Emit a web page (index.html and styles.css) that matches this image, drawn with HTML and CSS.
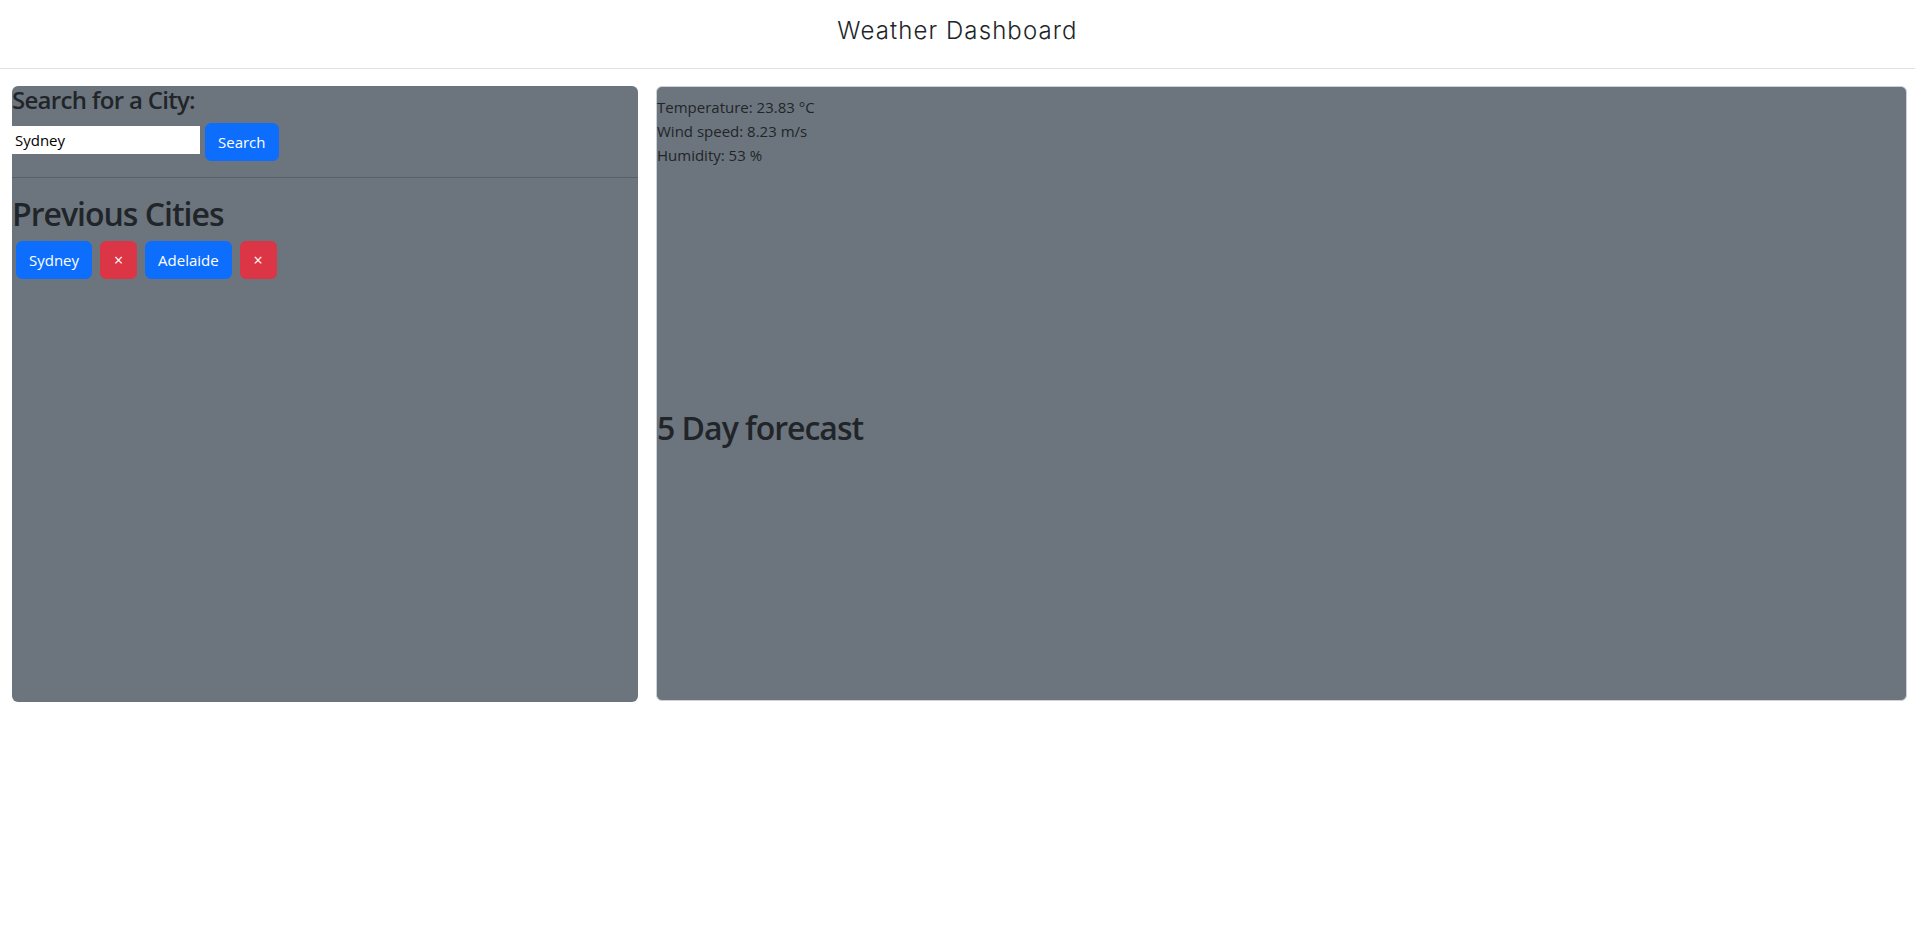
FILE: index.html
```html
<!DOCTYPE html>
<html lang="en">
<head>
<meta charset="utf-8">
<title>Weather Dashboard</title>
<link rel="stylesheet" href="styles.css">
</head>
<body>
<header class="site-header">
  <h1 class="site-title">Weather Dashboard</h1>
</header>
<main class="dashboard">
  <section class="panel search-panel">
    <h4 class="panel-heading">Search for a City:</h4>
    <form class="search-form">
      <input class="city-input" type="text" value="Sydney">
      <button class="btn btn-primary" type="button">Search</button>
    </form>
    <hr class="divider">
    <h2 class="section-title">Previous Cities</h2>
    <div class="history">
      <button class="btn btn-primary" type="button">Sydney</button>
      <button class="btn btn-danger" type="button">&times;</button>
      <button class="btn btn-primary" type="button">Adelaide</button>
      <button class="btn btn-danger" type="button">&times;</button>
    </div>
  </section>
  <section class="panel weather-panel">
    <div class="current">
      <p class="stat">Temperature: 23.83 °C</p>
      <p class="stat">Wind speed: 8.23 m/s</p>
      <p class="stat">Humidity: 53 %</p>
    </div>
    <div class="icon-slot"></div>
    <h2 class="section-title">5 Day forecast</h2>
  </section>
</main>
</body>
</html>
```
FILE: styles.css
```css
* { box-sizing: border-box; }

body {
  margin: 0;
  background: #ffffff;
  color: #212529;
  font-family: "Open Sans", "Noto Sans", sans-serif;
  font-size: 16px;
  line-height: 1.5;
}

.site-header {
  height: 69px;
  border-bottom: 1px solid #dee2e6;
  text-align: center;
}

.site-title {
  margin: 0;
  padding-top: 17px;
  font-family: Inter, "Open Sans", sans-serif;
  font-weight: 300;
  font-size: 24px;
  line-height: 1.2;
  letter-spacing: 1.1px;
  color: #212529;
}

.dashboard {
  display: flex;
  align-items: flex-start;
  gap: 18px;
  padding: 17px 8px 0 12px;
}

.panel {
  background: #6c757d;
  border-radius: 6px;
  height: 616px;
}

.search-panel {
  width: 626px;
  flex: 0 0 626px;
}

.weather-panel {
  flex: 1 1 auto;
  border: 1px solid #cdd1d5;
  height: 615px;
}

.panel-heading {
  margin: 0 0 8px;
  font-size: 24px;
  font-weight: 600;
  line-height: 1.2;
  letter-spacing: -0.7px;
}

.search-form {
  display: flex;
  align-items: flex-start;
  gap: 5px;
  margin: 0;
}

.city-input {
  width: 188px;
  height: 28px;
  margin-top: 3px;
  padding: 0 3px;
  border: none;
  background: #ffffff;
  font-family: "Open Sans", sans-serif;
  font-size: 15px;
  color: #000000;
}

.btn {
  height: 38px;
  padding: 6px 12px;
  border: 1px solid transparent;
  border-radius: 6px;
  font-family: "Open Sans", sans-serif;
  font-size: 15px;
  line-height: 24px;
  color: #ffffff;
  cursor: pointer;
}

.btn-primary { background: #0d6efd; border-color: #0d6efd; }
.btn-danger { background: #dc3545; border-color: #dc3545; font-size: 16px; padding: 6px 12px; width: 37px; }

.divider {
  margin: 16px 0;
  border: 0;
  border-top: 1px solid #596066;
}

.section-title {
  margin: 0 0 8px;
  padding-top: 1px;
  font-size: 32px;
  font-weight: 600;
  line-height: 1.2;
  letter-spacing: -1px;
}

.history {
  display: flex;
  gap: 8px;
  padding-left: 4px;
}

.current {
  padding-top: 8px;
}

.stat {
  margin: 0;
  font-size: 15px;
  line-height: 24px;
  color: #212529;
}

.icon-slot {
  height: 241px;
}
```
